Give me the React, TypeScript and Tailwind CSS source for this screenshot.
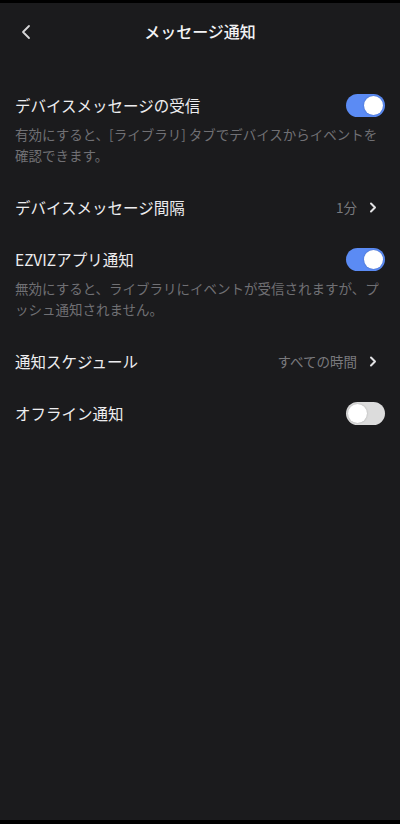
import React from 'react';

const font = { fontFamily: '"Noto Sans CJK JP", "Noto Sans", sans-serif' };

function Toggle({ on }: { on: boolean }) {
    return (
        <div
            className={`w-[39px] h-[23px] rounded-full p-[2px] flex items-center shrink-0 ${
                on ? 'bg-[#5b8bf4] justify-end' : 'bg-[#dcdcdc] justify-start'
            }`}
        >
            <div className="w-[19px] h-[19px] rounded-full bg-white shadow-[0_0_2px_rgba(0,0,0,0.25)]" />
        </div>
    );
}

function Chevron() {
    return (
        <svg width="8" height="11" viewBox="0 0 8 11" className="shrink-0">
            <path d="M2 1.5 L6 5.5 L2 9.5" fill="none" stroke="#e2e2e4" strokeWidth="2" strokeLinecap="round" strokeLinejoin="round" />
        </svg>
    );
}

function SwitchRow({ title, on, desc }: { title: string; on: boolean; desc?: React.ReactNode }) {
    return (
        <div className="px-[15px] py-[15px]">
            <div className="flex items-center justify-between h-[22px]">
                <span className="text-[15.5px] text-[#ededef] leading-[22px]">{title}</span>
                <Toggle on={on} />
            </div>
            {desc && <p className="mt-[8px] text-[13.5px] leading-[21px] text-[#707074]">{desc}</p>}
        </div>
    );
}

function LinkRow({ title, value }: { title: string; value: string }) {
    return (
        <div className="px-[15px] py-[15px]">
            <div className="flex items-center justify-between h-[22px]">
                <span className="text-[15.5px] text-[#ededef] leading-[22px]">{title}</span>
                <div className="flex items-center gap-[12px] pr-[8px]">
                    <span className="text-[13.5px] text-[#7a7a7e]">{value}</span>
                    <Chevron />
                </div>
            </div>
        </div>
    );
}

export default function App() {
    return (
        <div className="w-[400px] h-[824px] bg-black flex flex-col" style={font}>
            <div className="h-[3px] shrink-0" />
            <div className="flex-1 bg-[#1b1b1d] flex flex-col">
                <header className="relative h-[56px] flex items-center justify-center shrink-0">
                    <button className="absolute left-[18px] top-[19px] p-[2px]">
                        <svg width="12" height="16" viewBox="0 0 12 16">
                            <path d="M9 2 L3 8 L9 14" fill="none" stroke="#d6d6d8" strokeWidth="1.8" strokeLinecap="round" strokeLinejoin="round" />
                        </svg>
                    </button>
                    <h1 className="text-[16px] font-medium text-[#f2f2f4]">メッセージ通知</h1>
                </header>

                <div className="pt-[20px]">
                    <SwitchRow
                        title="デバイスメッセージの受信"
                        on
                        desc={
                            <>
                                有効にすると、[ライブラリ] タブでデバイスからイベントを
                                <br />
                                確認できます。
                            </>
                        }
                    />
                    <LinkRow title="デバイスメッセージ間隔" value="1分" />
                    <SwitchRow
                        title="EZVIZアプリ通知"
                        on
                        desc={
                            <>
                                無効にすると、ライブラリにイベントが受信されますが、プ
                                <br />
                                ッシュ通知されません。
                            </>
                        }
                    />
                    <LinkRow title="通知スケジュール" value="すべての時間" />
                    <SwitchRow title="オフライン通知" on={false} />
                </div>
            </div>
            <div className="h-[4px] shrink-0" />
        </div>
    );
}
